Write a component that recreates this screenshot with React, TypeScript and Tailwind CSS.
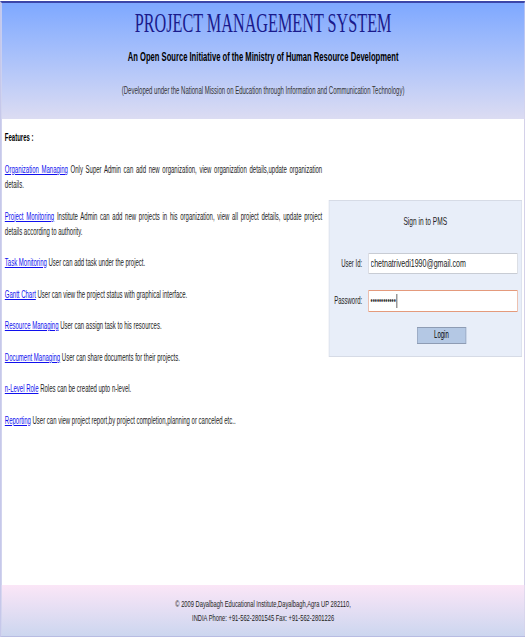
import React from "react";

// the page is laid out at 880px and squeezed to the 528px window
const features = [
  {
    name: "Organization Managing",
    text: "Only Super Admin can add new organization, view organization details,update organization details.",
  },
  {
    name: "Project Monitoring",
    text: "Institute Admin can add new projects in his organization, view all project details, update project details according to authority.",
  },
  { name: "Task Monitoring", text: "User can add task under the project." },
  { name: "Gantt Chart", text: "User can view the project status with graphical interface." },
  { name: "Resource Managing", text: "User can assign task to his resources." },
  { name: "Document Managing", text: "User can share documents for their projects." },
  { name: "n-Level Role", text: "Roles can be created upto n-level." },
  { name: "Reporting", text: "User can view project report,by project completion,planning or canceled etc.." },
];

const App = () => {
  return (
    <div className="w-[528px] h-[639px] overflow-hidden bg-white">
      <div className="w-[880px] origin-top-left scale-x-[0.6] font-['Liberation_Sans',Arial,sans-serif]">
        <div className="mt-px w-[875px] border-t-2 border-t-[#3c46a8] border-l-[3.3px] border-l-[#c6c8ea] border-r-[1.7px] border-r-[#b8b2da] border-b-[1.5px] border-b-[#b8bce2] flex flex-col h-[636px]">
          {/* Header */}
          <div className="h-[116px] bg-gradient-to-b from-[#7ea8ff] to-[#dcdcf2] flex flex-col items-center">
            <h1 className="mt-[5px] text-[27px] leading-[30px] text-[#1a1a8c] font-['Liberation_Serif','Times_New_Roman',serif]">
              PROJECT MANAGEMENT SYSTEM
            </h1>
            <h2 className="mt-[12px] text-[12.7px] leading-[15px] font-bold text-black">
              An Open Source Initiative of the Ministry of Human Resource Development
            </h2>
            <p className="mt-[19px] text-[10px] leading-[13px] text-[#333]">
              (Developed under the National Mission on Education through Information and Communication Technology)
            </p>
          </div>

          {/* Content */}
          <div className="flex-1 pt-[10px]">
            <div className="flex items-center">
              <div className="w-[534px] pl-[5px] text-[10px] leading-[15px] text-[#222]">
                <p className="pt-[1px] font-bold text-black">Features :</p>
                {features.map((f, i) => (
                  <p key={f.name} className={`text-justify ${i === 0 ? "mt-[17px]" : "mt-[16.5px]"}`}>
                    <a href="#" className="text-[#1010ee] underline">
                      {f.name}
                    </a>{" "}
                    {f.text}
                  </p>
                ))}
              </div>

              <div className="ml-[10.7px] w-[322px] h-[157px] bg-[#e8eef9] border border-[#d6dbe6] flex flex-col">
                <p className="mt-[13px] text-center text-[11px] leading-[14px] text-[#222]">Sign in to PMS</p>
                <div className="mt-[25px] flex items-center">
                  <label className="w-[55px] text-right text-[10px] text-[#222]">User Id:</label>
                  <input
                    readOnly
                    value="chetnatrivedi1990@gmail.com"
                    className="ml-[10px] w-[249px] h-[21px] px-[3px] bg-white border border-[#c8ccd4] text-[11.8px] text-[#222] outline-none"
                  />
                </div>
                <div className="mt-[16px] flex items-center">
                  <label className="w-[55px] text-right text-[10px] text-[#222]">Password:</label>
                  <div className="ml-[10px] w-[249px] h-[22px] px-[3px] bg-white border border-[#e49a7c] flex items-center">
                    <span className="text-[10px] text-[#333] leading-none">••••••••••••</span>
                    <span className="ml-[1px] w-px h-[14px] bg-black" />
                  </div>
                </div>
                <div className="mt-[15px] flex justify-center pl-[54px]">
                  <button className="w-[82px] h-[17px] bg-[#b4c8e4] border border-[#8e9cb4] text-[10px] leading-none text-black">
                    Login
                  </button>
                </div>
              </div>
            </div>
          </div>

          {/* Footer */}
          <div className="h-[51px] bg-gradient-to-b from-[#fbe6f7] to-[#ccd6ef] flex flex-col items-center pt-[12px] text-[9.6px] leading-[14px] text-[#222]">
            <p>© 2009 Dayalbagh Educational Institute,Dayalbagh,Agra UP 282110,</p>
            <p>INDIA Phone: +91-562-2801545 Fax: +91-562-2801226</p>
          </div>
        </div>
      </div>
    </div>
  );
};

export default App;
